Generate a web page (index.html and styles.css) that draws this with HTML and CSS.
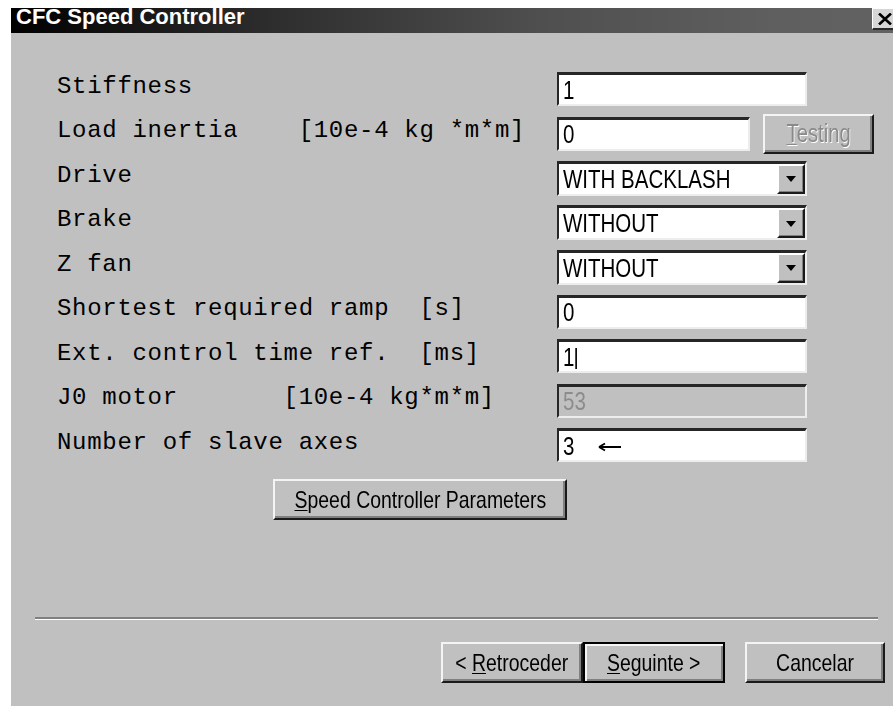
FILE: index.html
```html
<!DOCTYPE html>
<html lang="en">
<head>
<meta charset="utf-8">
<title>CFC Speed Controller</title>
<link rel="stylesheet" href="styles.css">
</head>
<body>
<div class="dialog">
  <div class="titlebar">
    <span class="title">CFC Speed Controller</span>
    <span class="close-btn">
      <svg width="14" height="12" viewBox="0 0 14 12"><path d="M1 0.5L13 11.5M13 0.5L1 11.5" stroke="#000" stroke-width="2.6" fill="none"/></svg>
    </span>
  </div>

  <div class="content">
    <div class="form">
      <div class="label">Stiffness</div>
      <div class="ctrl"><div class="field w-full"><span class="txt">1</span></div></div>

      <div class="label">Load inertia    [10e-4 kg *m*m]</div>
      <div class="ctrl">
        <div class="field w-short"><span class="txt">0</span></div>
        <div class="btn btn-testing disabled"><span class="btxt"><u>T</u>esting</span></div>
      </div>

      <div class="label">Drive</div>
      <div class="ctrl">
        <div class="combo"><span class="combo-text"><span class="txt">WITH BACKLASH</span></span><span class="combo-btn"><i class="tri"></i></span></div>
      </div>

      <div class="label">Brake</div>
      <div class="ctrl">
        <div class="combo"><span class="combo-text"><span class="txt">WITHOUT</span></span><span class="combo-btn"><i class="tri"></i></span></div>
      </div>

      <div class="label">Z fan</div>
      <div class="ctrl">
        <div class="combo"><span class="combo-text"><span class="txt">WITHOUT</span></span><span class="combo-btn"><i class="tri"></i></span></div>
      </div>

      <div class="label">Shortest required ramp  [s]</div>
      <div class="ctrl"><div class="field w-full"><span class="txt">0</span></div></div>

      <div class="label">Ext. control time ref.  [ms]</div>
      <div class="ctrl"><div class="field w-full"><span class="txt">1<span class="caret"></span></span></div></div>

      <div class="label">J0 motor       [10e-4 kg*m*m]</div>
      <div class="ctrl"><div class="field w-full field-disabled"><span class="txt">53</span></div></div>

      <div class="label">Number of slave axes</div>
      <div class="ctrl">
        <div class="field w-full"><span class="txt">3</span><svg class="arrow" width="25" height="10" viewBox="0 0 25 10"><path d="M2 5H24M2 5L8 1.5M2 5L8 8.5" stroke="#000" stroke-width="1.8" fill="none"/></svg></div>
      </div>
    </div>

    <div class="btn btn-params"><span class="btxt"><u>S</u>peed Controller Parameters</span></div>

    <div class="separator"></div>

    <div class="footer">
      <div class="btn btn-nav"><span class="btxt">&lt; <u>R</u>etroceder</span></div>
      <div class="btn btn-nav btn-default"><span class="btxt"><u>S</u>eguinte &gt;</span></div>
      <div class="btn btn-cancel"><span class="btxt">Cancelar</span></div>
    </div>
  </div>
</div>
</body>
</html>
```

FILE: styles.css
```css
html, body {
  margin: 0;
  background: #fff;
}

.dialog {
  margin: 8px 0 0 11px;
  width: 882px;
  height: 698px;
  background: #c0c0c0;
  display: flex;
  flex-direction: column;
  font-family: "Liberation Sans", Arial, sans-serif;
  color: #000;
}

/* caption bar */
.titlebar {
  flex: none;
  height: 25px;
  display: flex;
  align-items: flex-start;
  background: linear-gradient(90deg, #000 0%, #2e2e2e 30%, #4f4f4f 60%, #5e5e5e 85%, #626262 100%);
}

.title {
  font-family: "Liberation Sans", Arial, sans-serif;
  font-weight: bold;
  font-size: 22px;
  line-height: 18px;
  color: #fff;
  padding-left: 5px;
  white-space: nowrap;
}

.close-btn {
  margin-left: auto;
  width: 21px;
  height: 22px;
  box-sizing: border-box;
  background: #d6d6d6;
  border-top: 1px solid #fff;
  border-left: 1px solid #fff;
  border-bottom: 2px solid #2a2a2a;
  display: flex;
  align-items: center;
  justify-content: flex-end;
  padding-right: 1px;
}

/* form body */
.content {
  flex: 1;
  padding: 39px 0 0 46px;
  display: flex;
  flex-direction: column;
}

.form {
  display: grid;
  grid-template-columns: 500px 330px;
  grid-auto-rows: 34px;
  row-gap: 10.5px;
  align-items: center;
}

.label {
  font-family: "Liberation Mono", "Courier New", monospace;
  font-size: 24px;
  letter-spacing: 0.7px;
  white-space: pre;
  line-height: 28px;
  padding-bottom: 5px;
}

.ctrl {
  display: flex;
  align-items: center;
  height: 34px;
}

/* narrow dialog lettering */
.txt {
  display: inline-block;
  font-size: 25px;
  transform: scaleX(0.82);
  transform-origin: left center;
  white-space: nowrap;
}

/* sunken edit box */
.field {
  box-sizing: border-box;
  height: 34px;
  background: #fff;
  border-style: solid;
  border-width: 3px 2px 2px 2px;
  border-color: #262626 #ededed #ededed #262626;
  line-height: 28px;
  padding-left: 4px;
  display: flex;
  align-items: center;
  white-space: nowrap;
}

.w-full { width: 250px; }
.w-short { width: 193px; }

.field-disabled {
  background: #c0c0c0;
  color: #8c8c8c;
}

.caret {
  display: inline-block;
  width: 2px;
  height: 21px;
  background: #000;
  margin-left: 1px;
  vertical-align: -3px;
}

.arrow {
  margin-left: 20px;
  margin-top: 2px;
}

/* drop-down list */
.combo {
  box-sizing: border-box;
  width: 250px;
  height: 35px;
  background: #fff;
  border-style: solid;
  border-width: 3px 2px 2px 2px;
  border-color: #262626 #ededed #ededed #262626;
  display: flex;
  align-items: stretch;
}

.combo-text {
  flex: 1;
  line-height: 30px;
  padding-left: 4px;
  white-space: nowrap;
  overflow: hidden;
}

.combo-btn {
  width: 28px;
  box-sizing: border-box;
  background: #c0c0c0;
  border-style: solid;
  border-width: 2px;
  border-color: #fff #1a1a1a #1a1a1a #fff;
  box-shadow: inset -1px -1px 0 #808080;
  display: flex;
  align-items: center;
  justify-content: center;
}

.tri {
  width: 0;
  height: 0;
  border-left: 5px solid transparent;
  border-right: 5px solid transparent;
  border-top: 6px solid #000;
  margin-top: 1px;
}

/* raised push buttons */
.btn {
  box-sizing: border-box;
  background: #c0c0c0;
  border-style: solid;
  border-width: 2px;
  border-color: #f4f4f4 #1a1a1a #1a1a1a #f4f4f4;
  box-shadow: inset -2px -2px 0 #808080;
  display: flex;
  align-items: center;
  justify-content: center;
  white-space: nowrap;
}

.btxt {
  display: inline-block;
  flex: none;
  font-size: 24px;
  transform: scaleX(0.81);
  transform-origin: center center;
}

.btn u {
  text-decoration-thickness: 1px;
  text-underline-offset: 2px;
}

.btn-testing {
  width: 111px;
  height: 40px;
  margin-left: 13px;
}

.btn-testing .btxt {
  font-size: 25px;
}

.disabled {
  color: #8a8a8a;
  text-shadow: 1px 1px 0 #fff;
}

.btn-params {
  width: 294px;
  height: 41px;
  margin: 17px 0 0 216px;
}

.separator {
  width: 843px;
  height: 0;
  border-top: 2px solid #808080;
  border-bottom: 1px solid #fff;
  margin: 97px 0 0 -22px;
}

.footer {
  display: flex;
  margin: 22px 0 0 384px;
}

.btn-nav {
  width: 142px;
  height: 41px;
}

.btn-default {
  border-color: #000;
  box-shadow: inset 2px 2px 0 #f4f4f4, inset -2px -2px 0 #808080;
}

.btn-cancel {
  width: 140px;
  height: 41px;
  margin-left: 20px;
}
```
